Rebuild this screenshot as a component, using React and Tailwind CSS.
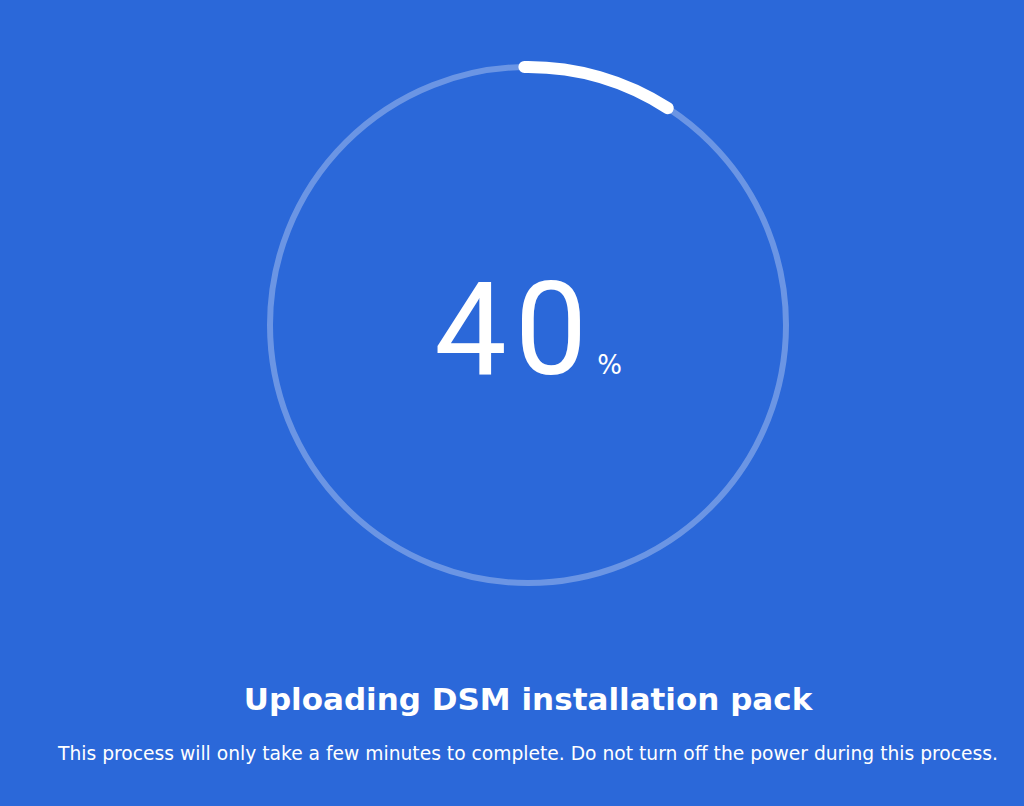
export default function App() {
  const r = 258;
  const c = 265;
  const pt = (deg) => {
    const a = ((deg - 90) * Math.PI) / 180;
    return [c + r * Math.cos(a), c + r * Math.sin(a)];
  };
  const [sx, sy] = pt(-0.8);
  const [ex, ey] = pt(32.8);

  return (
    <div className="w-[1024px] h-[806px] bg-[#2b68d9] text-white pl-8 flex flex-col items-center overflow-hidden font-['DejaVu_Sans',Verdana,sans-serif]">
      <div className="relative mt-[60px] w-[530px] h-[530px]">
        <svg width="530" height="530" viewBox="0 0 530 530" className="absolute inset-0">
          <circle cx={c} cy={c} r={r} fill="none" stroke="rgba(255,255,255,0.3)" strokeWidth="6" />
          <path
            d={`M ${sx} ${sy} A ${r} ${r} 0 0 1 ${ex} ${ey}`}
            fill="none"
            stroke="#fff"
            strokeWidth="12"
            strokeLinecap="round"
          />
        </svg>
        <div className="absolute inset-0 flex items-center justify-center">
          <div className="flex items-baseline pt-[8px]">
            <span className="text-[129px] leading-none font-normal tracking-[8px] font-['Roboto',sans-serif]">40</span>
            <span className="text-[26px] leading-none ml-[2px]">%</span>
          </div>
        </div>
      </div>
      <h1 className="mt-[94px] text-[31px] leading-none font-bold">Uploading DSM installation pack</h1>
      <p className="mt-[30px] text-[18.7px] leading-none">
        This process will only take a few minutes to complete. Do not turn off the power during this process.
      </p>
    </div>
  );
}
